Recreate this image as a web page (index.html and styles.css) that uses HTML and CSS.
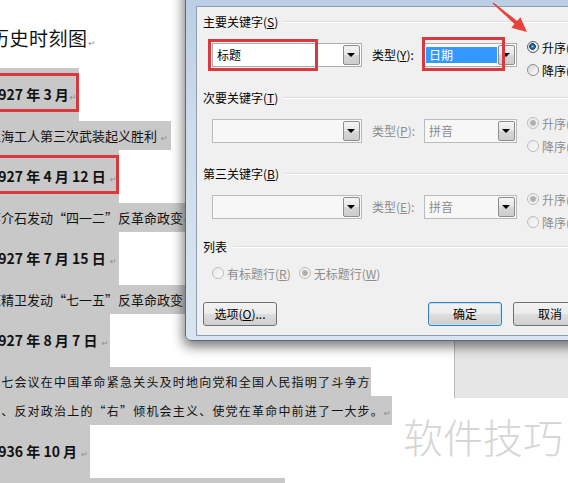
FILE: index.html
```html
<!DOCTYPE html>
<html lang="zh-CN">
<head>
    <meta charset="UTF-8">
    <title>排序文字</title>
    <link rel="stylesheet" href="styles.css">
</head>
<body>
    <div class="screen">
        <!-- 文档内容 -->
        <div class="doc">
            <div class="doc-title">历史时刻图<span class="pm">↵</span></div>
            <div class="para date marked">1927 年 3 月<span class="pm">↵</span></div>
            <div class="para event">上海工人第三次武装起义胜利 <span class="pm">↵</span></div>
            <div class="para date marked">1927 年 4 月 12 日 <span class="pm">↵</span></div>
            <div class="para event">蒋介石发动“四一二”反革命政变<span class="pm">↵</span></div>
            <div class="para date">1927 年 7 月 15 日 <span class="pm">↵</span></div>
            <div class="para event">汪精卫发动“七一五”反革命政变 <span class="pm">↵</span></div>
            <div class="para date">1927 年 8 月 7 日 <span class="pm">↵</span></div>
            <div class="para long">八七会议在中国革命紧急关头及时地向党和全国人民指明了斗争方</div>
            <div class="para long">向、反对政治上的“右”倾机会主义、使党在革命中前进了一大步。<span class="pm">↵</span></div>
            <div class="para date">1936 年 10 月 <span class="pm">↵</span></div>
            <div class="para event">中国工农红军三大主力在会宁会师，长征胜利结束<span class="pm">↵</span></div>
        </div>

        <!-- 右侧灰色窗格 -->
        <div class="side-pane"></div>

        <!-- 排序对话框 -->
        <div class="dialog">
            <div class="dlg-body">
                <div class="group-title">主要关键字(<u>S</u>)</div>
                <div class="key-row">
                    <div class="combo key boxed"><span class="combo-text">标题</span><span class="drop"></span></div>
                    <span class="type-label">类型(<u>Y</u>):</span>
                    <div class="combo type boxed"><span class="combo-text sel">日期</span><span class="drop"></span></div>
                    <div class="order">
                        <span class="radio on">升序(<u>A</u>)</span>
                        <span class="radio">降序(<u>D</u>)</span>
                    </div>
                </div>

                <div class="group-title">次要关键字(<u>T</u>)</div>
                <div class="key-row disabled">
                    <div class="combo key"><span class="combo-text"></span><span class="drop"></span></div>
                    <span class="type-label">类型(<u>P</u>):</span>
                    <div class="combo type"><span class="combo-text">拼音</span><span class="drop"></span></div>
                    <div class="order">
                        <span class="radio on">升序(<u>C</u>)</span>
                        <span class="radio">降序(<u>N</u>)</span>
                    </div>
                </div>

                <div class="group-title">第三关键字(<u>B</u>)</div>
                <div class="key-row disabled">
                    <div class="combo key"><span class="combo-text"></span><span class="drop"></span></div>
                    <span class="type-label">类型(<u>E</u>):</span>
                    <div class="combo type"><span class="combo-text">拼音</span><span class="drop"></span></div>
                    <div class="order">
                        <span class="radio on">升序(<u>I</u>)</span>
                        <span class="radio">降序(<u>G</u>)</span>
                    </div>
                </div>

                <div class="group-title list-title">列表</div>
                <div class="list-row disabled">
                    <span class="radio">有标题行(<u>R</u>)</span>
                    <span class="radio on">无标题行(<u>W</u>)</span>
                </div>

                <div class="btn-row">
                    <button class="btn">选项(<u>O</u>)...</button>
                    <button class="btn default">确定</button>
                    <button class="btn">取消</button>
                </div>
            </div>
        </div>

        <!-- 标注箭头 -->
        <svg class="arrow" width="55" height="40" viewBox="480 0 55 40">
            <polygon points="493.5,2.5 517.1,21 520.4,17.2 527,32 511.3,27.8 514.5,24 492.5,3.5" fill="#e8413a"/>
        </svg>

        <div class="watermark">软件技巧</div>
    </div>
</body>
</html>
```

FILE: styles.css
```css
/* 全局 */
*,
*::before,
*::after {
    margin: 0;
    padding: 0;
    box-sizing: border-box;
}

body {
    background-color: #fff;
    font-family: "Noto Sans CJK SC", "Liberation Sans", sans-serif;
    color: #111;
}

.screen {
    position: relative;
    width: 568px;
    height: 483px;
    overflow: hidden;
}

/* 文档 */
.doc {
    margin-left: -12px;
}

.doc-title {
    height: 68px;
    padding: 26px 0 0 2px;
    font-size: 19px;
    line-height: 24px;
    letter-spacing: 0.5px;
}

.para {
    position: relative;
    width: fit-content;
    background-color: #c8c8c8;
    white-space: nowrap;
}

.date {
    height: 53px;
    line-height: 53px;
    padding: 0 2px 0 2px;
    font-size: 14px;
    font-weight: bold;
}

.event {
    height: 29px;
    line-height: 29px;
    padding-right: 3px;
    font-size: 13px;
}

.long {
    height: 29px;
    line-height: 29px;
    font-size: 12px;
    letter-spacing: 1.2px;
}

.pm {
    font-family: "DejaVu Sans", sans-serif;
    font-size: 8px;
    font-weight: normal;
    letter-spacing: 0;
    color: #8a8a8a;
    margin-left: 1px;
}

.long .pm {
    margin-left: 0;
    padding-right: 1px;
}

/* 红框标注 */
.para.marked::after {
    content: '';
    position: absolute;
    left: -4px;
    right: 0;
    top: 5px;
    bottom: 9px;
    border: 3px solid #d9383e;
}

.side-pane {
    position: absolute;
    left: 454px;
    top: 320px;
    width: 114px;
    height: 78px;
    background-color: #e6e6e6;
    border-left: 1px solid #b8b8b8;
}

/* 对话框 */
.dialog {
    position: absolute;
    left: 185px;
    top: -30px;
    width: 422px;
    padding: 35px 10px 4px 10px;
    border: 1px solid #5a6b7e;
    border-radius: 6px;
    background: linear-gradient(#b7cbe2, #cddbea 40%, #d9e4f0);
    box-shadow: 0 4px 12px 2px rgba(0, 0, 0, 0.5);
}

.dlg-body {
    padding: 7px 8px 9px 6px;
    background-color: #f0f0f0;
    border: 1px solid #8c9db1;
    font-size: 12px;
    color: #000;
}

.group-title {
    display: flex;
    align-items: center;
    height: 16px;
    line-height: 16px;
    white-space: nowrap;
}

.group-title::after {
    content: '';
    flex: 1;
    margin-left: 6px;
    border-top: 1px solid #d5dfe5;
    border-bottom: 1px solid #fff;
}

.key-row {
    display: flex;
    align-items: flex-start;
    margin: 13px 0 12px 9px;
}

.combo {
    position: relative;
    display: flex;
    align-items: stretch;
    height: 24px;
    padding: 1px;
    border: 1px solid #abadb3;
    background-color: #fff;
}

.combo.key {
    width: 150px;
}

.combo.type {
    width: 93px;
}

/* 对话框里的红框 */
.combo.key.boxed::after,
.combo.type.boxed::after {
    content: '';
    position: absolute;
    border: 3px solid #d9383e;
}

.combo.key.boxed::after {
    left: -5px;
    top: -5px;
    width: 110px;
    height: 32px;
}

.combo.type.boxed::after {
    left: -3px;
    top: -7px;
    width: 83px;
    height: 34px;
}

.combo-text {
    flex: 1;
    padding-left: 3px;
    line-height: 20px;
}

.combo-text.sel {
    margin: 2px 1px 2px 0;
    line-height: 16px;
    background-color: #3399ff;
    color: #fff;
}

.drop {
    position: relative;
    width: 17px;
    border: 1px solid #8e8e8e;
    border-radius: 2px;
    background: linear-gradient(#f4f4f4, #e6e6e6 50%, #d6d6d6 51%, #cdcdcd);
}

.drop::after {
    content: '';
    position: absolute;
    left: 3px;
    top: 7px;
    border-left: 4px solid transparent;
    border-right: 4px solid transparent;
    border-top: 4px solid #000;
}

.type-label {
    width: 52px;
    margin-left: 10px;
    line-height: 24px;
    white-space: nowrap;
}

.order {
    display: flex;
    flex-direction: column;
    gap: 7px;
    margin: -4px 0 0 10px;
}

.radio {
    display: flex;
    align-items: center;
    height: 16px;
    white-space: nowrap;
}

.radio::before {
    content: '';
    width: 12px;
    height: 12px;
    margin-right: 3px;
    border: 1px solid #8e8f8f;
    border-radius: 50%;
    background: linear-gradient(135deg, #d6d6d6, #fdfdfd);
}

.radio.on::before {
    border-color: #5a5a5a;
    background: radial-gradient(circle at 45% 45%, #8cd0f5 0, #2d75ad 1.5px, #0f3b63 3px, #e8e8e8 3.5px, #fdfdfd);
}

/* 禁用状态 */
.disabled .type-label,
.disabled .combo-text,
.disabled .radio {
    color: #8d8d8d;
}

.disabled .combo {
    border-color: #b9bcbf;
    background-color: #f7f7f7;
}

.disabled .radio::before {
    border-color: #bcbcbc;
    background: linear-gradient(135deg, #e8e8e8, #fbfbfb);
}

.disabled .radio.on::before {
    background: radial-gradient(circle, #a6a6a6 0, #b8b8b8 2.5px, #ececec 3.5px, #fbfbfb);
}

.list-title {
    margin-top: -3px;
}

.list-row {
    display: flex;
    gap: 8px;
    margin: 10px 0 0 9px;
}

.btn-row {
    display: flex;
    margin-top: 21px;
}

.btn {
    width: 74px;
    height: 24px;
    border: 1px solid #707070;
    border-radius: 3px;
    background: linear-gradient(#f2f2f2, #ebebeb 50%, #dddddd 51%, #cfcfcf);
    font-family: "Noto Sans CJK SC", sans-serif;
    font-size: 12px;
    color: #000;
    line-height: 20px;
}

.btn.default {
    margin-left: auto;
    margin-right: 11px;
    border-color: #3c7fb1;
    box-shadow: inset 0 0 0 1px #b8e2f8;
}

/* 覆盖层 */
.arrow {
    position: absolute;
    left: 480px;
    top: 0;
}

.watermark {
    position: absolute;
    left: 403px;
    top: 414px;
    font-size: 40px;
    font-weight: 300;
    line-height: 44px;
    color: #d6d6d6;
    white-space: nowrap;
}
```
